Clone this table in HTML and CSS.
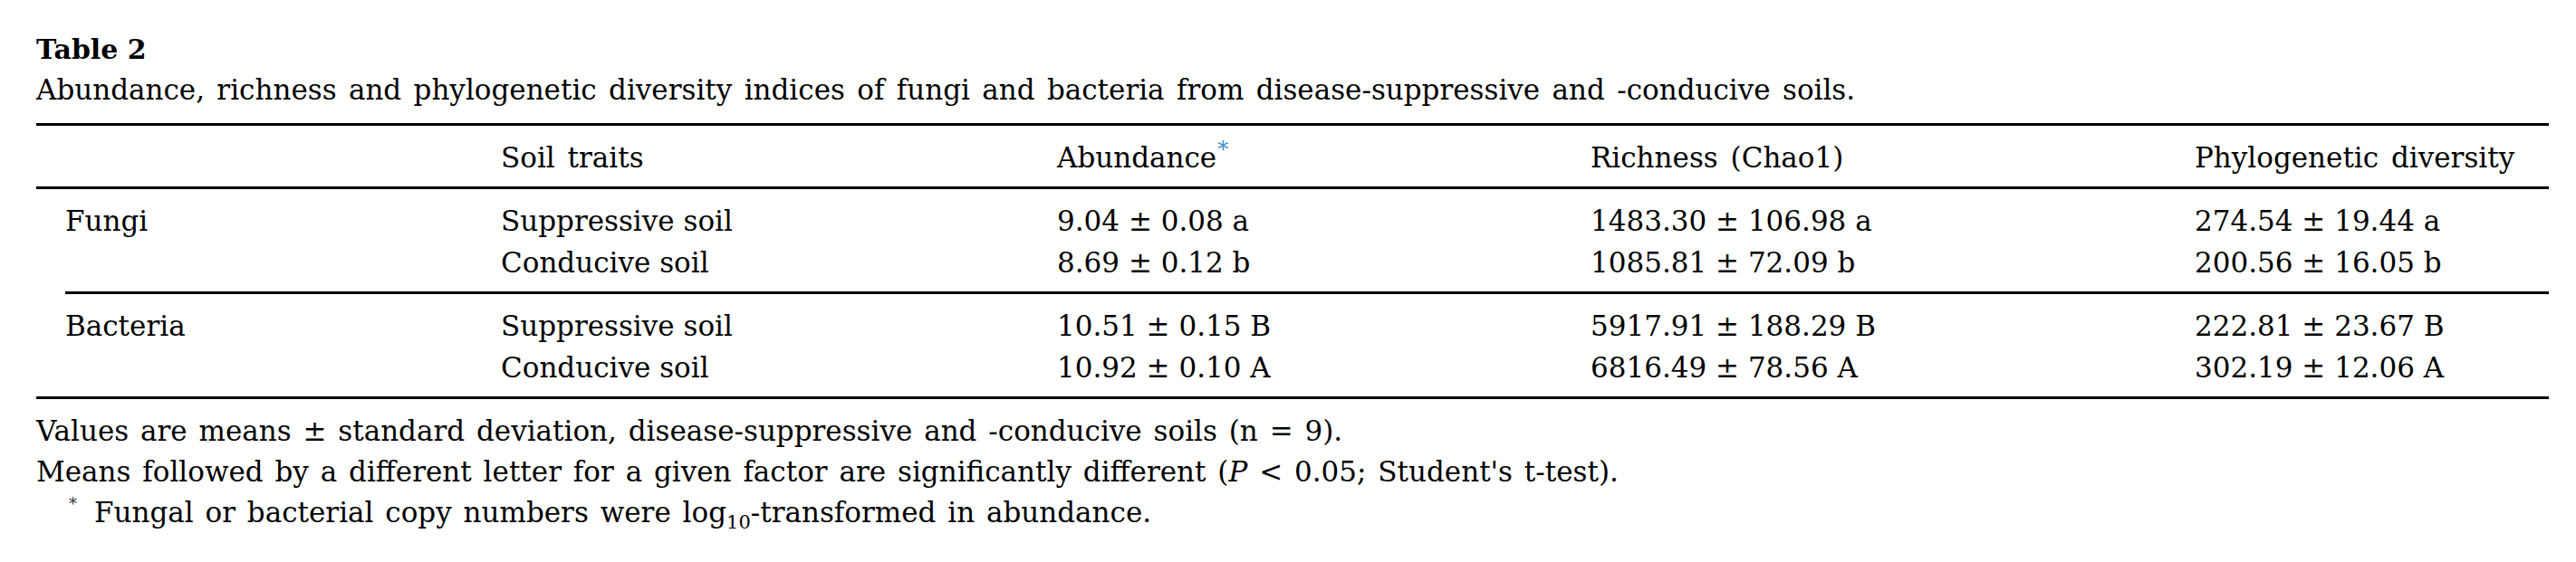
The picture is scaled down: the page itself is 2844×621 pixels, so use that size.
FILE: index.html
```html
<!DOCTYPE html>
<html lang="en">
<head>
<meta charset="utf-8">
<title>Table 2</title>
<link rel="stylesheet" href="styles.css">
</head>
<body>
<div class="page">
  <h2 class="title">Table 2</h2>
  <p class="caption">Abundance, richness and phylogenetic diversity indices of fungi and bacteria from disease-suppressive and -conducive soils.</p>
  <div class="table">
    <div class="rule"></div>
    <div class="row head">
      <div class="cell first"></div>
      <div class="cell">Soil traits</div>
      <div class="cell">Abundance<sup class="ref">*</sup></div>
      <div class="cell">Richness (Chao1)</div>
      <div class="cell">Phylogenetic diversity</div>
    </div>
    <div class="rule"></div>
    <div class="group">
      <div class="row">
        <div class="cell first">Fungi</div>
        <div class="cell">Suppressive soil</div>
        <div class="cell">9.04 ± 0.08 a</div>
        <div class="cell">1483.30 ± 106.98 a</div>
        <div class="cell">274.54 ± 19.44 a</div>
      </div>
      <div class="row">
        <div class="cell first"></div>
        <div class="cell">Conducive soil</div>
        <div class="cell">8.69 ± 0.12 b</div>
        <div class="cell">1085.81 ± 72.09 b</div>
        <div class="cell">200.56 ± 16.05 b</div>
      </div>
    </div>
    <div class="rule indent"></div>
    <div class="group">
      <div class="row">
        <div class="cell first">Bacteria</div>
        <div class="cell">Suppressive soil</div>
        <div class="cell">10.51 ± 0.15 B</div>
        <div class="cell">5917.91 ± 188.29 B</div>
        <div class="cell">222.81 ± 23.67 B</div>
      </div>
      <div class="row">
        <div class="cell first"></div>
        <div class="cell">Conducive soil</div>
        <div class="cell">10.92 ± 0.10 A</div>
        <div class="cell">6816.49 ± 78.56 A</div>
        <div class="cell">302.19 ± 12.06 A</div>
      </div>
    </div>
    <div class="rule"></div>
  </div>
  <div class="notes">
    <p class="note">Values are means ± standard deviation, disease-suppressive and -conducive soils (n = 9).</p>
    <p class="note">Means followed by a different letter for a given factor are significantly different (<i>P</i> &lt; 0.05; Student's t-test).</p>
    <p class="note foot"><span class="mark">*</span>Fungal or bacterial copy numbers were log<sub class="sub">10</sub>-transformed in abundance.</p>
  </div>
</div>
</body>
</html>
```

FILE: styles.css
```css
html, body {
  margin: 0;
  padding: 0;
  background: #ffffff;
}

body {
  font-family: "DejaVu Serif", "Liberation Serif", serif;
  font-size: 31px;
  color: #000000;
}

.page {
  padding: 32px 30px 0 40px;
  width: 2774px;
}

.title {
  margin: 0;
  font-size: 30px;
  font-weight: bold;
  line-height: 45px;
}

.caption {
  margin: 0;
  line-height: 45px;
  word-spacing: 3.5px;
}

.table {
  margin-top: 14px;
}

.rule {
  height: 3px;
  background: #000000;
}

.rule.indent {
  margin-left: 32px;
}

.row {
  display: grid;
  grid-template-columns: 513px 614px 589px 667px 1fr;
  line-height: 46px;
  white-space: nowrap;
}

.head {
  padding: 12px 0 9px;
  word-spacing: 4px;
}

.group {
  padding: 12px 0 9px;
}

.cell.first {
  padding-left: 32px;
}

.ref {
  color: #3b8fd0;
  font-size: 24px;
  line-height: 0;
  vertical-align: 12px;
  margin-left: 1px;
}

.notes {
  margin-top: 13px;
}

.note {
  margin: 0;
  line-height: 45px;
  word-spacing: 3px;
}

.foot {
  padding-left: 36px;
}

.mark {
  display: inline-block;
  width: 28px;
  font-size: 18px;
  line-height: 0;
  vertical-align: 14px;
  color: #333333;
}

.sub {
  font-size: 21px;
  line-height: 0;
  vertical-align: -7px;
}
```
